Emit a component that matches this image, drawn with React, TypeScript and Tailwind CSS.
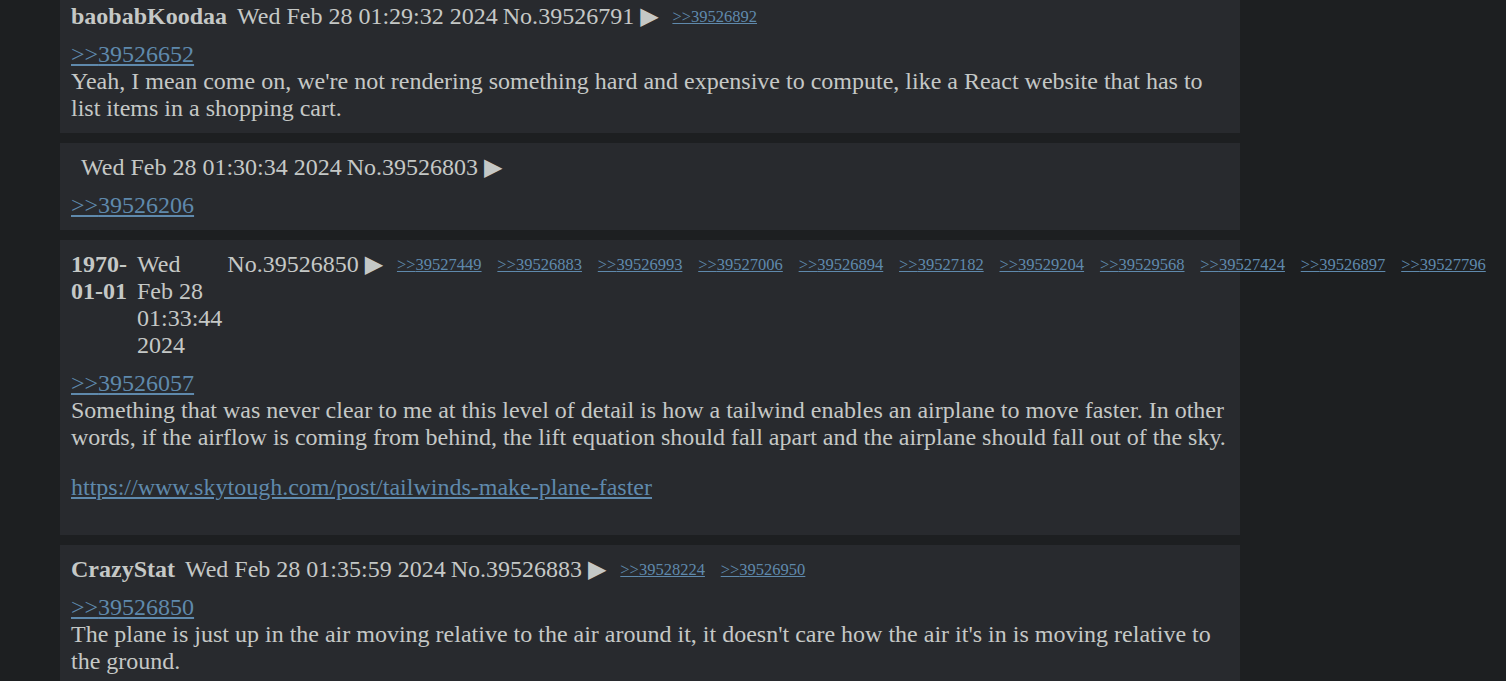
import React from 'react';

interface Post {
  name: string;
  date: string;
  no: string;
  backlinks: string[];
  quote: string;
  lines: string[];
  url?: string;
}

const posts: Post[] = [
  {
    name: 'baobabKoodaa',
    date: 'Wed Feb 28 01:29:32 2024',
    no: '39526791',
    backlinks: ['39526892'],
    quote: '39526652',
    lines: [
      "Yeah, I mean come on, we're not rendering something hard and expensive to compute, like a React website that has to list items in a shopping cart.",
    ],
  },
  {
    name: '',
    date: 'Wed Feb 28 01:30:34 2024',
    no: '39526803',
    backlinks: [],
    quote: '39526206',
    lines: [],
  },
  {
    name: '1970-01-01',
    date: 'Wed Feb 28 01:33:44 2024',
    no: '39526850',
    backlinks: [
      '39527449', '39526883', '39526993', '39527006', '39526894', '39527182',
      '39529204', '39529568', '39527424', '39526897', '39527796',
    ],
    quote: '39526057',
    lines: [
      'Something that was never clear to me at this level of detail is how a tailwind enables an airplane to move faster. In other words, if the airflow is coming from behind, the lift equation should fall apart and the airplane should fall out of the sky.',
    ],
    url: 'https://www.skytough.com/post/tailwinds-make-plane-faster',
  },
  {
    name: 'CrazyStat',
    date: 'Wed Feb 28 01:35:59 2024',
    no: '39526883',
    backlinks: ['39528224', '39526950'],
    quote: '39526850',
    lines: [
      "The plane is just up in the air moving relative to the air around it, it doesn't care how the air it's in is moving relative to the ground.",
    ],
  },
];

function PostCard({ post }: { post: Post }) {
  return (
    <div className="bg-[#282a2e] w-[1180px] pl-[11px] pr-[11px] pt-[11px] pb-[11px]">
      {/* Header: items shrink to min-content when backlinks overflow */}
      <div className="flex items-start gap-[5px]">
        <span className="font-bold mr-[5px]">{post.name}</span>
        <span>{post.date}</span>
        <span className="whitespace-nowrap shrink-0 mr-[-2px]">
          No.{post.no} <span className="font-['DejaVu_Sans',sans-serif]">▶</span>
        </span>
        {post.backlinks.map((b) => (
          <a
            key={b}
            href="#"
            className="shrink-0 ml-[10.8px] text-[16.5px] text-[#5f89ac] underline whitespace-nowrap"
          >
            &gt;&gt;{b}
          </a>
        ))}
      </div>
      <div className="mt-[11px]">
        <a href="#" className="block w-fit text-[#5f89ac] underline">
          &gt;&gt;{post.quote}
        </a>
        {post.lines.map((l, i) => (
          <p key={i}>{l}</p>
        ))}
        {post.url && (
          <a href="#" className="block w-fit my-[23px] text-[#5f89ac] underline">
            {post.url}
          </a>
        )}
      </div>
    </div>
  );
}

export default function App() {
  return (
    <div className="bg-[#1d1f21] text-[#c5c8c6] font-['Liberation_Serif',serif] text-[24px] leading-[27px] overflow-hidden h-[681px]">
      <div className="ml-[60px] mt-[-8px] flex flex-col gap-[10px]">
        {posts.map((p) => (
          <PostCard key={p.no} post={p} />
        ))}
      </div>
    </div>
  );
}
